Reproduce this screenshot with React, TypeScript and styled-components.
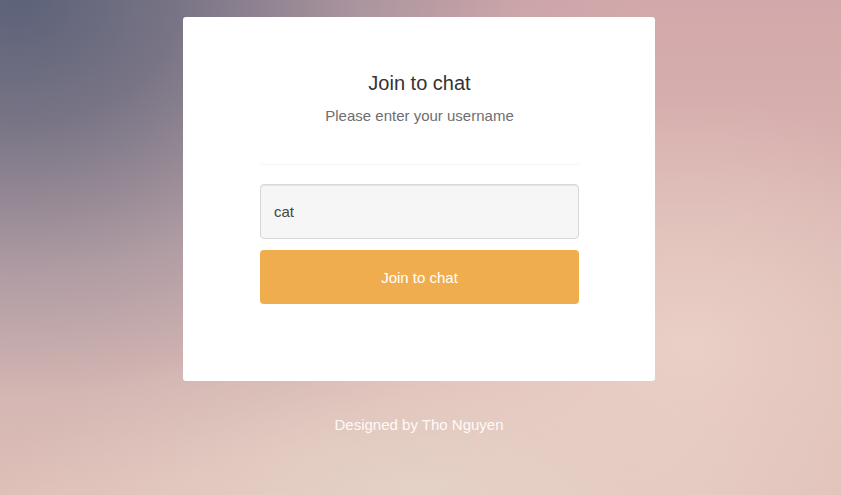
import React from "react";
import styled, { createGlobalStyle } from "styled-components";

const GlobalStyle = createGlobalStyle`
  html, body {
    margin: 0;
    padding: 0;
    height: 100%;
  }
  body {
    font-family: "Liberation Sans", Arial, sans-serif;
    font-size: 15px;
  }
  #root { min-height: 100%; }
`;

const Page = styled.div`
  min-height: 100vh;
  box-sizing: border-box;
  display: flex;
  flex-direction: column;
  align-items: center;
  padding: 17px 3px 40px 0;
  background:
    radial-gradient(ellipse 75% 100% at 2% 0%, rgba(92, 98, 121, 1) 0%, rgba(104, 106, 126, 0.85) 25%, rgba(140, 134, 150, 0.55) 55%, rgba(160, 148, 160, 0.15) 80%, rgba(160, 148, 160, 0) 100%),
    radial-gradient(ellipse 40% 50% at 82% 70%, rgba(235, 210, 200, 0.9) 0%, rgba(235, 210, 200, 0) 100%),
    radial-gradient(ellipse 50% 35% at 50% 100%, rgba(229, 210, 199, 1) 0%, rgba(229, 210, 199, 0) 100%),
    linear-gradient(to bottom, #d3a8aa 0%, #dab6b2 50%, #dfc0b8 100%);
`;

const Card = styled.div`
  width: 472px;
  box-sizing: border-box;
  background: #ffffff;
  border-radius: 3px;
  padding: 53px 76px 77px 77px;
  display: flex;
  flex-direction: column;
`;

const Panel = styled.div`
  border: 1px solid transparent;
  border-radius: 4px;
  box-shadow: 0 1px 1px rgba(0, 0, 0, 0.05);
  padding: 1px 15px 37px;
  display: flex;
  flex-direction: column;
  align-items: center;
  gap: 12px;
`;

const Title = styled.div`
  font-size: 20px;
  line-height: 22px;
  color: #333333;
`;

const Subtitle = styled.div`
  font-size: 15px;
  line-height: 20px;
  color: #6e6e6e;
`;

const Input = styled.input`
  margin-top: 20px;
  height: 55px;
  box-sizing: border-box;
  width: 100%;
  background: #f6f6f6;
  border: 1px solid #d8d8d8;
  border-radius: 4px;
  box-shadow: inset 0 1px 1px rgba(0, 0, 0, 0.075);
  padding: 0 13px;
  font-family: "Liberation Sans", Arial, sans-serif;
  font-size: 15px;
  color: #444444;
  outline: none;
`;

const Button = styled.button`
  margin-top: 11px;
  height: 54px;
  width: 100%;
  border: none;
  border-radius: 4px;
  background: #f0ad4e;
  color: #ffffff;
  font-family: "Liberation Sans", Arial, sans-serif;
  font-size: 15px;
  cursor: pointer;
`;

const Footer = styled.div`
  margin-top: 34px;
  font-size: 15px;
  line-height: 20px;
  color: #fdfaf8;
`;

export default function App() {
  return (
    <>
      <GlobalStyle />
      <Page>
        <Card>
          <Panel>
            <Title>Join to chat</Title>
            <Subtitle>Please enter your username</Subtitle>
          </Panel>
          <Input defaultValue="cat" />
          <Button>Join to chat</Button>
        </Card>
        <Footer>Designed by Tho Nguyen</Footer>
      </Page>
    </>
  );
}
